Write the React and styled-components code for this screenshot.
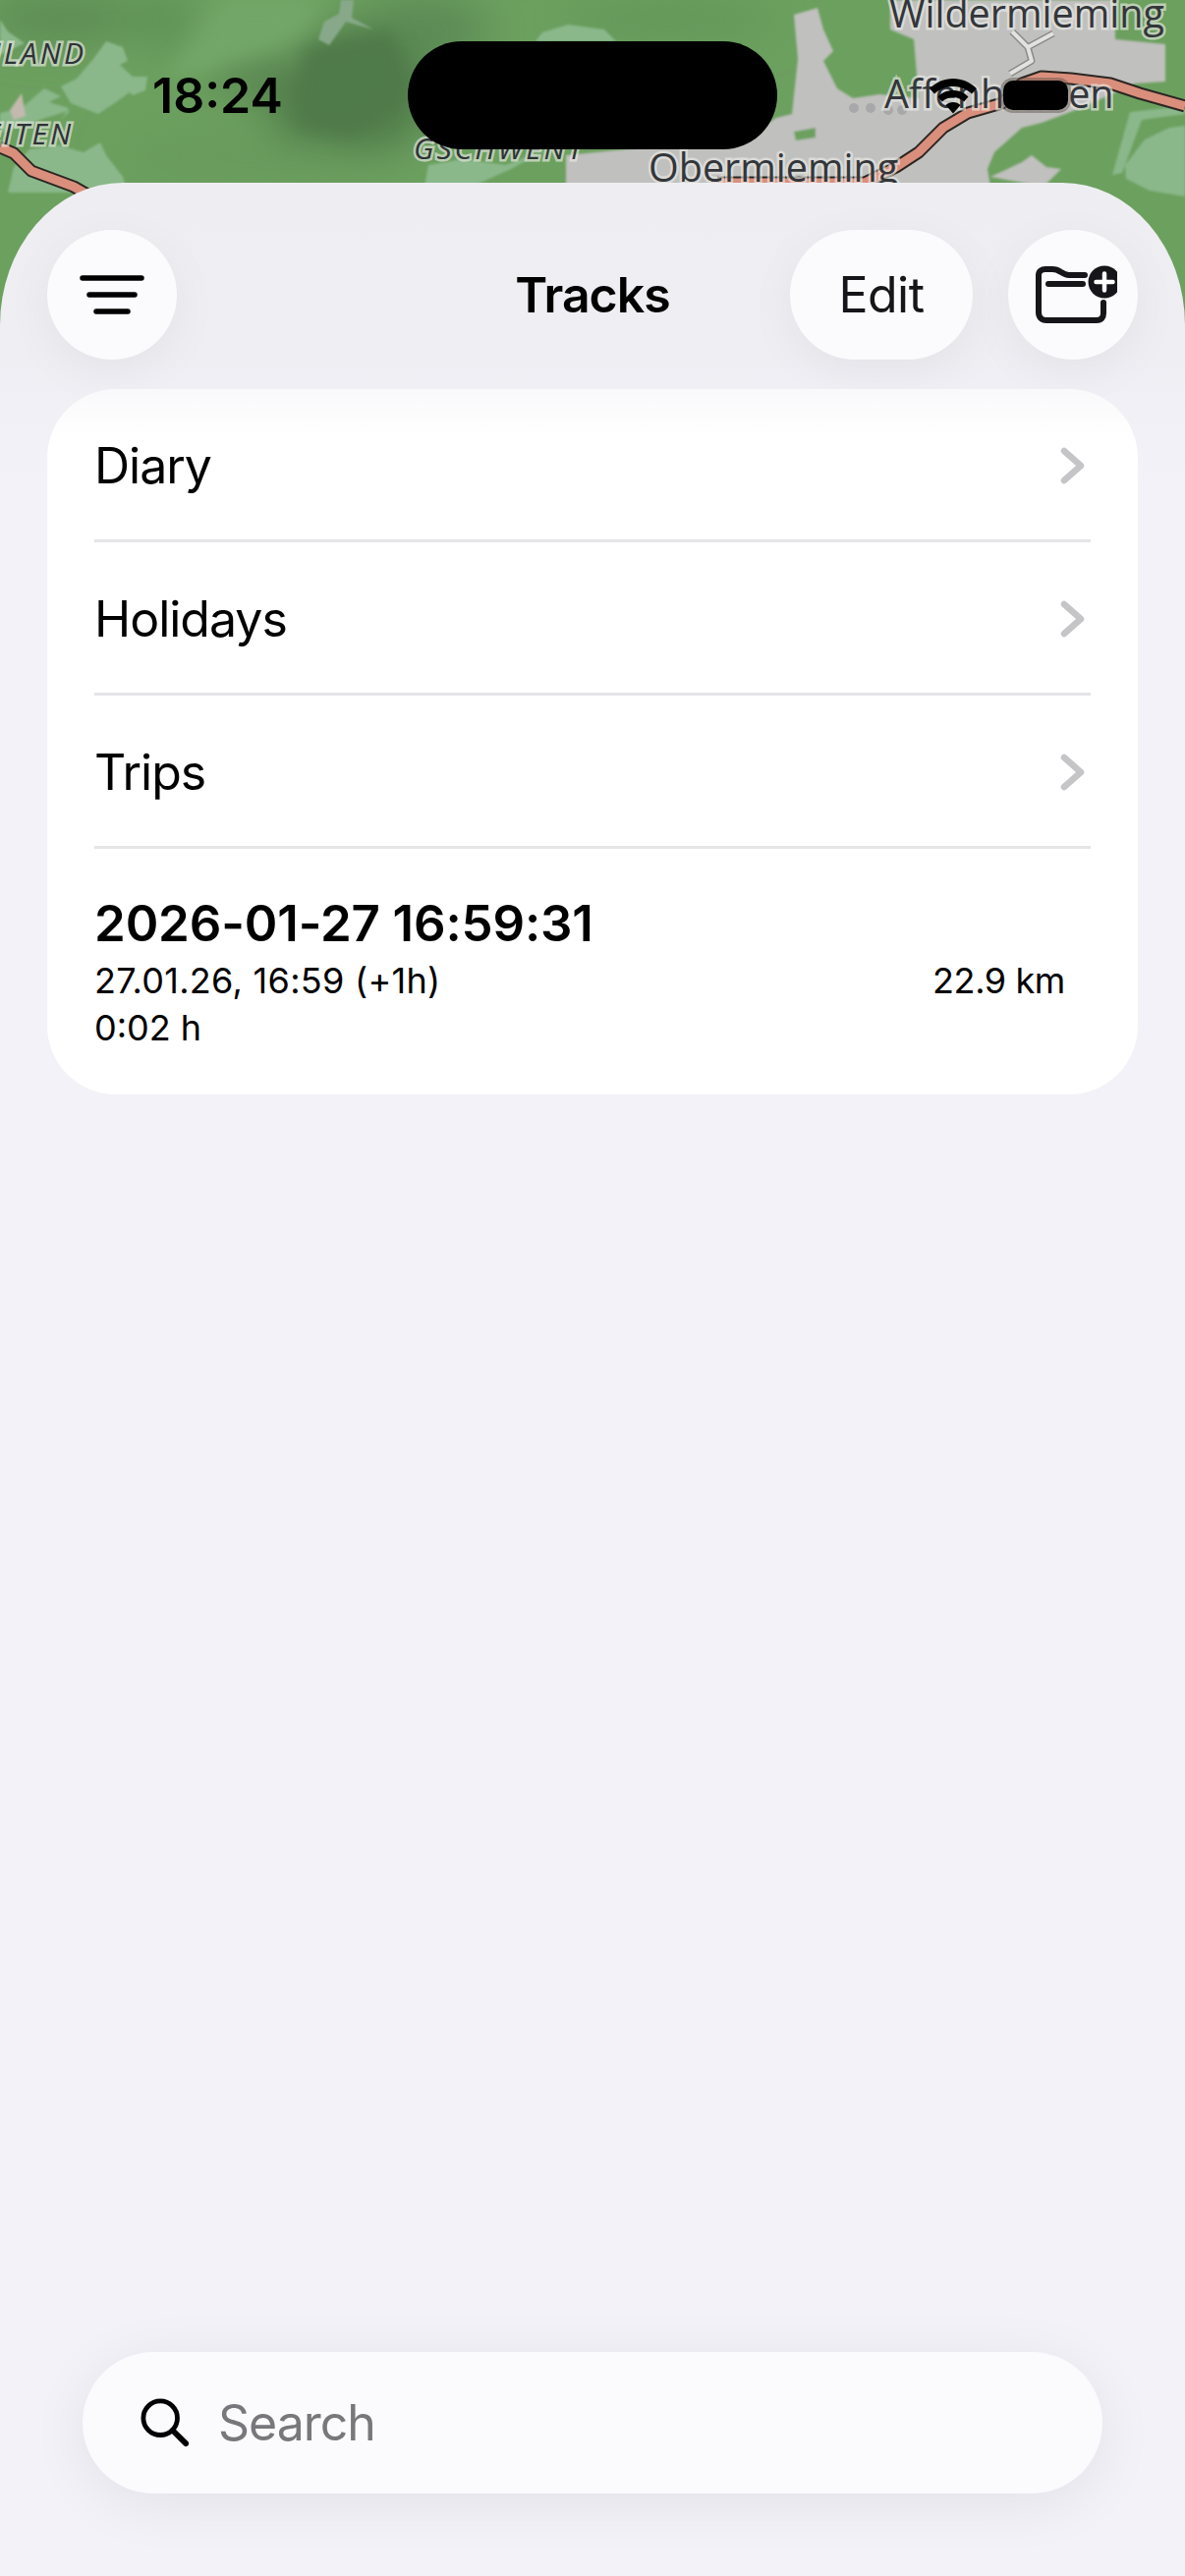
import React from "react";
import styled, { createGlobalStyle } from "styled-components";

const GlobalStyle = createGlobalStyle`
  html, body {
    margin: 0;
    padding: 0;
    background: #f2f2f8;
  }
  * {
    box-sizing: border-box;
  }
`;

const folders = ["Diary", "Holidays", "Trips"];

function MapDrawing() {
  return (
    <MapSvg viewBox="0 0 1206 340" width="1206" height="340">
      <defs>
        <filter id="soft" x="-40%" y="-40%" width="180%" height="180%">
          <feGaussianBlur stdDeviation="22" />
        </filter>
        <filter id="softer" x="-40%" y="-40%" width="180%" height="180%">
          <feGaussianBlur stdDeviation="9" />
        </filter>
        <filter id="edge">
          <feGaussianBlur stdDeviation="1.2" />
        </filter>
      </defs>
      <rect width="1206" height="340" fill="#6ca05f" />
      <g filter="url(#soft)">
        <ellipse cx="355" cy="95" rx="85" ry="65" fill="#4f7a49" />
        <ellipse cx="270" cy="75" rx="60" ry="20" fill="#557f4e" />
        <ellipse cx="60" cy="18" rx="80" ry="24" fill="#5b8a52" />
        <ellipse cx="170" cy="20" rx="40" ry="30" fill="#5f9156" />
        <ellipse cx="430" cy="30" rx="70" ry="35" fill="#5c8a54" />
        <ellipse cx="260" cy="30" rx="60" ry="30" fill="#74a868" />
        <ellipse cx="680" cy="20" rx="110" ry="20" fill="#629659" />
        <ellipse cx="250" cy="160" rx="130" ry="22" fill="#679a5c" />
      </g>
      <g filter="url(#softer)">
        <path d="M165 80 L235 0 L330 0 L300 35 L240 60 L205 75 Z" fill="#72a667" />
        <path d="M310 50 L400 30 L420 90 L360 140 L300 130 Z" fill="#4f7a49" />
      </g>
      <g filter="url(#edge)">
        <path
          d="M108 42 L125 48 L130 62 L122 66 L135 78 L150 78 L148 92 L135 97 L132 94 L118 104 L100 116 L72 105 L62 88 L78 80 L95 60 Z"
          fill="#8ab88a"
        />
        <path
          d="M0 115 L22 110 L45 90 L62 98 L50 104 L70 110 L62 122 L72 112 L0 135 Z"
          fill="#8ab88a"
        />
        <path d="M0 20 L8 32 L25 44 L0 56 Z" fill="#8ab88a" />
        <path
          d="M8 196 L14 170 L30 152 L60 148 L85 155 L102 145 L108 158 L125 180 L130 196 Z"
          fill="#8ab88a"
        />
        <path d="M10 112 L22 95 L26 118 L14 122 Z" fill="#c3b9ae" />
        <path
          d="M347 0 L360 0 L358 18 L380 30 L352 22 L345 32 L335 46 L324 40 L330 22 L345 14 Z"
          fill="#87a98a"
        />
        <path d="M545 42 L552 33 L578 25 L600 28 L615 30 L627 42 Z" fill="#8ab88a" />
        <path
          d="M432 190 L436 168 L470 162 L515 168 L560 150 L520 172 L480 190 Z"
          fill="#8ab88a"
        />
        <path
          d="M808 15 L832 8 L838 30 L848 52 L838 62 L852 90 L868 100 L895 96 L935 100 L930 40 L906 30 L906 0 L1135 0 L1135 40 L1186 45 L1186 83 L1155 85 L1100 110 L1060 125 L1040 130 L1012 155 L1005 172 L1008 190 L576 190 L576 158 L760 140 L790 120 L806 116 L812 60 Z"
          fill="#c0c0be"
        />
        <path d="M810 143 L830 140 L830 130 L808 134 Z" fill="#6ca05f" />
        <path d="M1008 180 L1040 165 L1050 158 L1065 170 L1080 172 L1062 190 Z" fill="#c0c0be" />
        <path d="M1132 178 L1150 114 L1206 108 L1206 116 L1162 122 L1142 176 Z" fill="#8ab88a" />
        <path d="M1145 168 L1165 142 L1190 130 L1206 128 L1206 200 L1170 194 L1146 182 Z" fill="#8ab88a" />
      </g>
      <RoadCasing d="M0 150 L14 156 L32 174 L75 190 L110 210" />
      <RoadFill d="M0 150 L14 156 L32 174 L75 190 L110 210" />
      <RoadCasing d="M730 186 L880 186 L912 170 L935 155 L960 130 L985 115 L1020 105 L1040 85 L1060 78 L1090 80 L1130 85 L1160 95 L1206 108" />
      <RoadFill d="M730 186 L880 186 L912 170 L935 155 L960 130 L985 115 L1020 105 L1040 85 L1060 78 L1090 80 L1130 85 L1160 95 L1206 108" />
      <Track d="M1028 75 L1050 62 L1046 48 L1030 32 M1046 48 L1072 34" />
      <TrackInner d="M1028 75 L1050 62 L1046 48 L1030 32 M1046 48 L1072 34" />
      <g fill="#a8a8aa">
        <circle cx="869" cy="110" r="5" />
        <circle cx="886" cy="110" r="5" />
        <circle cx="904" cy="112" r="5" />
        <circle cx="918" cy="112" r="5" />
      </g>
      <Place x="905" y="28">Wildermieming</Place>
      <Place x="900" y="110">Affenhausen</Place>
      <Place x="660" y="185">Obermieming</Place>
      <Locality x="88" y="65" textAnchor="end">HLAND</Locality>
      <Locality x="75" y="147" textAnchor="end">EITEN</Locality>
      <Locality x="421" y="162">GSCHWENT</Locality>
    </MapSvg>
  );
}

function WifiIcon() {
  return (
    <svg width="48" height="36" viewBox="0 0 48 36" fill="#000">
      <path d="M24 0 C15 0 7 3.500 0 10 L5 15.500 C10.500 10.500 17 8 24 8 C31 8 37.500 10.500 43 15.500 L48 10 C41 3.500 33 0 24 0 Z" />
      <path d="M24 12 C18 12 13 14 8.500 18.500 L13 23.500 C16 20.500 20 19 24 19 C28 19 32 20.500 35 23.500 L39.500 18.500 C35 14 30 12 24 12 Z" />
      <path d="M24 24 C21 24 18.500 25 16.500 27 L24 35.500 L31.500 27 C29.500 25 27 24 24 24 Z" />
    </svg>
  );
}

function FilterIcon() {
  return (
    <svg width="66" height="40" viewBox="0 0 66 40" fill="none" stroke="#000" strokeWidth="5.500" strokeLinecap="round">
      <path d="M3 3 H63 M10 20 H56 M17 37 H49" />
    </svg>
  );
}

function FolderPlusIcon() {
  return (
    <svg width="90" height="72" viewBox="-7 -2 90 72" fill="none">
      <g stroke="#15151a" strokeWidth="6" strokeLinecap="round" strokeLinejoin="round">
        <path d="M50 14 H34 C30 14 28 12.500 25 10.500 C23 9 21 8 17 8 H10 C6 8 3 10 3 14 V52 C3 57 6 60 11 60 H62 C67 60 69 57 69 53 V42" />
        <path d="M13 23 H48" />
      </g>
      <circle cx="70" cy="21" r="16.500" fill="#15151a" />
      <path d="M70 12.500 V29.500 M61.500 21 H78.500" stroke="#fff" strokeWidth="4.500" strokeLinecap="round" />
    </svg>
  );
}

function ChevronIcon() {
  return (
    <svg width="26" height="38" viewBox="0 0 26 38" fill="none" stroke="#c5c5c8" strokeWidth="6.500" strokeLinecap="round" strokeLinejoin="round">
      <path d="M4 4 L21 19 L4 34" />
    </svg>
  );
}

function SearchIcon() {
  return (
    <svg width="50" height="50" viewBox="0 0 52 52" fill="none" stroke="#000" strokeWidth="5" strokeLinecap="round">
      <circle cx="21" cy="21" r="18" />
      <path d="M34 34 L48 48" strokeWidth="6" />
    </svg>
  );
}

export default function App() {
  return (
    <Page>
      <GlobalStyle />
      <MapDrawing />
      <StatusBar>
        <Clock>18:24</Clock>
        <Island />
        <StatusIcons>
          <WifiIcon />
          <Battery />
        </StatusIcons>
      </StatusBar>

      <Sheet>
        <Header>
          <HeaderSide>
            <RoundButton>
              <FilterIcon />
            </RoundButton>
          </HeaderSide>
          <Title>Tracks</Title>
          <HeaderSide $end>
            <EditButton>Edit</EditButton>
            <RoundButton>
              <FolderPlusIcon />
            </RoundButton>
          </HeaderSide>
        </Header>

        <Card>
          {folders.map((name) => (
            <FolderRow key={name}>
              <span>{name}</span>
              <ChevronIcon />
            </FolderRow>
          ))}
          <TrackRow>
            <TrackTitle>2026-01-27 16:59:31</TrackTitle>
            <TrackMeta>
              <MetaText $spacing="0.3px">27.01.26, 16:59 (+1h)</MetaText>
              <MetaText $spacing="-0.4px">22.9 km</MetaText>
            </TrackMeta>
            <TrackMeta>
              <MetaText>0:02 h</MetaText>
            </TrackMeta>
          </TrackRow>
        </Card>

        <SearchBar>
          <SearchIcon />
          <SearchText>Search</SearchText>
        </SearchBar>
      </Sheet>
    </Page>
  );
}

const Page = styled.div`
  position: relative;
  width: 1206px;
  height: 2622px;
  padding-top: 186px;
  overflow: hidden;
  font-family: "Inter", "Liberation Sans", sans-serif;
  color: #000;
  display: flex;
  flex-direction: column;
`;

const MapSvg = styled.svg`
  position: absolute;
  top: 0;
  left: 0;
  display: block;
`;

const RoadCasing = styled.path`
  fill: none;
  stroke: #2b2622;
  stroke-width: 13;
  stroke-linejoin: round;
`;

const RoadFill = styled.path`
  fill: none;
  stroke: #d98f7c;
  stroke-width: 9;
  stroke-linejoin: round;
`;

const Track = styled.path`
  fill: none;
  stroke: #8a8a88;
  stroke-width: 7;
  stroke-linejoin: round;
`;

const TrackInner = styled.path`
  fill: none;
  stroke: #e2e2e0;
  stroke-width: 4;
  stroke-linejoin: round;
`;

const Place = styled.text`
  font-family: "Open Sans", sans-serif;
  font-size: 39.5px;
  fill: #33363a;
  stroke: rgba(235, 235, 230, 0.65);
  stroke-width: 5px;
  paint-order: stroke;
`;

const Locality = styled.text`
  font-family: "Open Sans", sans-serif;
  font-size: 30px;
  font-style: italic;
  letter-spacing: 3px;
  fill: #2f3336;
  stroke: rgba(235, 235, 230, 0.65);
  stroke-width: 5px;
  paint-order: stroke;
`;

const StatusBar = styled.div`
  position: absolute;
  top: 42px;
  left: 0;
  width: 1206px;
  height: 110px;
`;

const Clock = styled.div`
  position: absolute;
  left: 155px;
  top: 0;
  line-height: 110px;
  font-size: 50px;
  font-weight: 600;
  color: #000;
`;

const Island = styled.div`
  position: absolute;
  left: 415px;
  top: 0;
  width: 376px;
  height: 110px;
  border-radius: 55px;
  background: #000;
`;

const StatusIcons = styled.div`
  position: absolute;
  left: 946px;
  top: 38px;
  display: flex;
  align-items: flex-start;
  gap: 27px;
`;

const Battery = styled.div`
  width: 66px;
  height: 30px;
  margin-top: 2px;
  border-radius: 10px;
  background: #000;
  box-shadow: 0 0 0 3px rgba(90, 80, 70, 0.45);
`;

const Sheet = styled.div`
  position: relative;
  flex: 1;
  display: flex;
  flex-direction: column;
  padding: 47px 48px 84px;
  border-radius: 125px 125px 0 0 / 145px 145px 0 0;
  background: linear-gradient(180deg, #eeeef2 0, #eeeef3 170px, #f2f2f8 300px);
`;

const Header = styled.header`
  display: grid;
  grid-template-columns: 1fr auto 1fr;
  align-items: center;
  height: 133px;
`;

const HeaderSide = styled.div`
  display: flex;
  align-items: center;
  justify-content: ${(p) => (p.$end ? "flex-end" : "flex-start")};
  gap: 36px;
`;

const RoundButton = styled.div`
  width: 132px;
  height: 132px;
  border-radius: 50%;
  background: #fbfbfe;
  display: flex;
  align-items: center;
  justify-content: center;
  box-shadow: 0 12px 50px rgba(0, 0, 0, 0.05);
`;

const EditButton = styled.div`
  width: 186px;
  height: 132px;
  border-radius: 66px;
  background: #fbfbfe;
  display: flex;
  align-items: center;
  justify-content: center;
  font-size: 50px;
  letter-spacing: -0.5px;
  color: #15151a;
  box-shadow: 0 12px 50px rgba(0, 0, 0, 0.05);
`;

const Title = styled.h1`
  margin: 0;
  font-size: 50px;
  font-weight: 600;
  letter-spacing: -1px;
  color: #000;
`;

const Card = styled.section`
  margin-top: 30px;
  border-radius: 70px;
  background: linear-gradient(180deg, #f9f9fb 0, #ffffff 50px);
  overflow: hidden;
`;

const FolderRow = styled.div`
  height: 156px;
  margin: 0 48px;
  padding: 3px 5px 0 0;
  border-bottom: 3px solid #e5e5e8;
  display: flex;
  align-items: center;
  justify-content: space-between;
  font-size: 50px;
  letter-spacing: -1px;
  color: #000;
`;

const TrackRow = styled.div`
  padding: 46px 48px 0;
  height: 250px;
`;

const TrackTitle = styled.div`
  font-size: 51px;
  line-height: 60px;
  font-weight: 600;
  letter-spacing: -0.15px;
  margin-bottom: 4px;
`;

const TrackMeta = styled.div`
  display: flex;
  justify-content: space-between;
  padding-right: 26px;
  font-size: 36px;
  line-height: 48px;
`;

const MetaText = styled.span`
  letter-spacing: ${(p) => p.$spacing || "0"};
`;

const SearchBar = styled.div`
  margin: auto 36px 0;
  height: 144px;
  border-radius: 72px;
  background: #fbfbfe;
  display: flex;
  align-items: center;
  gap: 29px;
  padding: 0 0 0 59px;
  box-shadow: 0 10px 60px rgba(0, 0, 0, 0.07);
`;

const SearchText = styled.span`
  font-size: 50px;
  letter-spacing: -1px;
  color: #77777c;
`;
